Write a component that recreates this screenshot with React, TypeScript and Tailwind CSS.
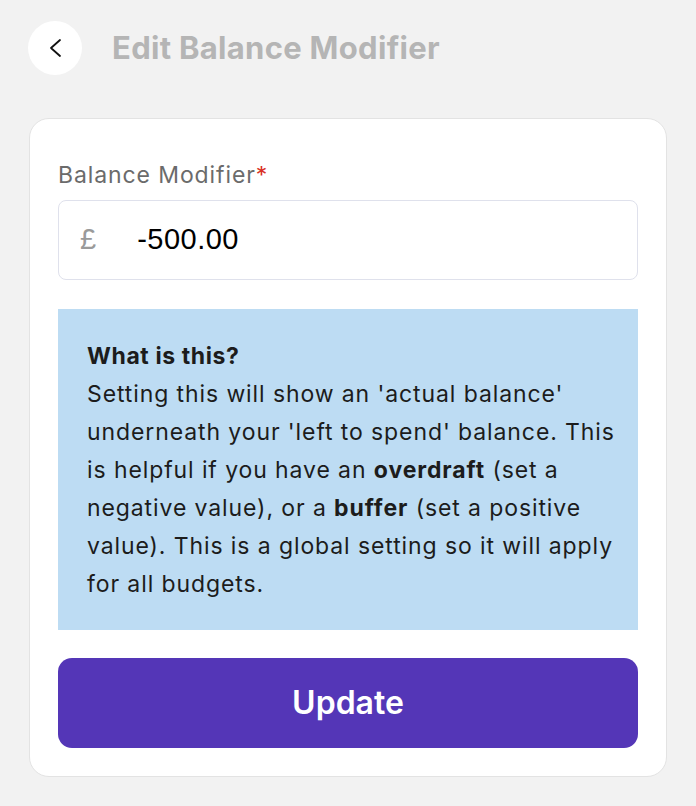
import React from "react";

export default function App() {
  return (
    <div
      className="min-h-[806px] w-full bg-[#f2f2f2] pt-[21px]"
      style={{ fontFamily: "Inter, 'Noto Sans', sans-serif" }}
    >
      <div className="flex items-center pl-[28px]">
        <button className="flex h-[54px] w-[54px] items-center justify-center rounded-full bg-white">
          <svg width="16" height="22" viewBox="0 0 16 22" fill="none" stroke="#111" strokeWidth="1.8" strokeLinecap="round" strokeLinejoin="round">
            <path d="M13 3 L4 11 L13 19" />
          </svg>
        </button>
        <h1 className="ml-[30px] text-[31px] font-bold tracking-[0.3px] text-[#b5b5b5]">
          Edit Balance Modifier
        </h1>
      </div>

      <div className="mx-[29px] mt-[43px] rounded-[20px] border border-[#e3e3e3] bg-white px-[28px] pb-[28px] pt-[41px]">
        <label className="block text-[23px] leading-[30px] tracking-[0.9px] text-[#6b6b6b]">
          Balance Modifier<span className="text-[#d93025]">*</span>
        </label>
        <div className="mt-[10px] flex h-[80px] items-center rounded-[8px] border border-[#dfe1ec] bg-white pl-[21px]">
          <span className="text-[29px] text-[#9a9a9a]" style={{ fontFamily: "'Liberation Sans', Arial, sans-serif" }}>£</span>
          <span className="ml-[41px] text-[29px] tracking-[0.5px] text-black" style={{ fontFamily: "'Liberation Sans', Arial, sans-serif" }}>-500.00</span>
        </div>

        <div className="mt-[29px] bg-[#bddcf3] pb-[27px] pl-[29px] pr-[16px] pt-[28px] text-[23px] leading-[38px] tracking-[0.9px] text-[#1c1c1c]">
          <div className="font-bold tracking-[0.6px]">What is this?</div>
          <p>
            Setting this will show an 'actual balance' underneath your 'left to spend' balance. This is helpful if you have an <b>overdraft</b> (set a negative value), or a <b>buffer</b> (set a positive value). This is a global setting so it will apply for all budgets.
          </p>
        </div>

        <button className="mt-[28px] flex h-[90px] w-full items-center justify-center rounded-[14px] bg-[#5436b7] text-[32px] font-semibold text-white">
          Update
        </button>
      </div>
    </div>
  );
}
